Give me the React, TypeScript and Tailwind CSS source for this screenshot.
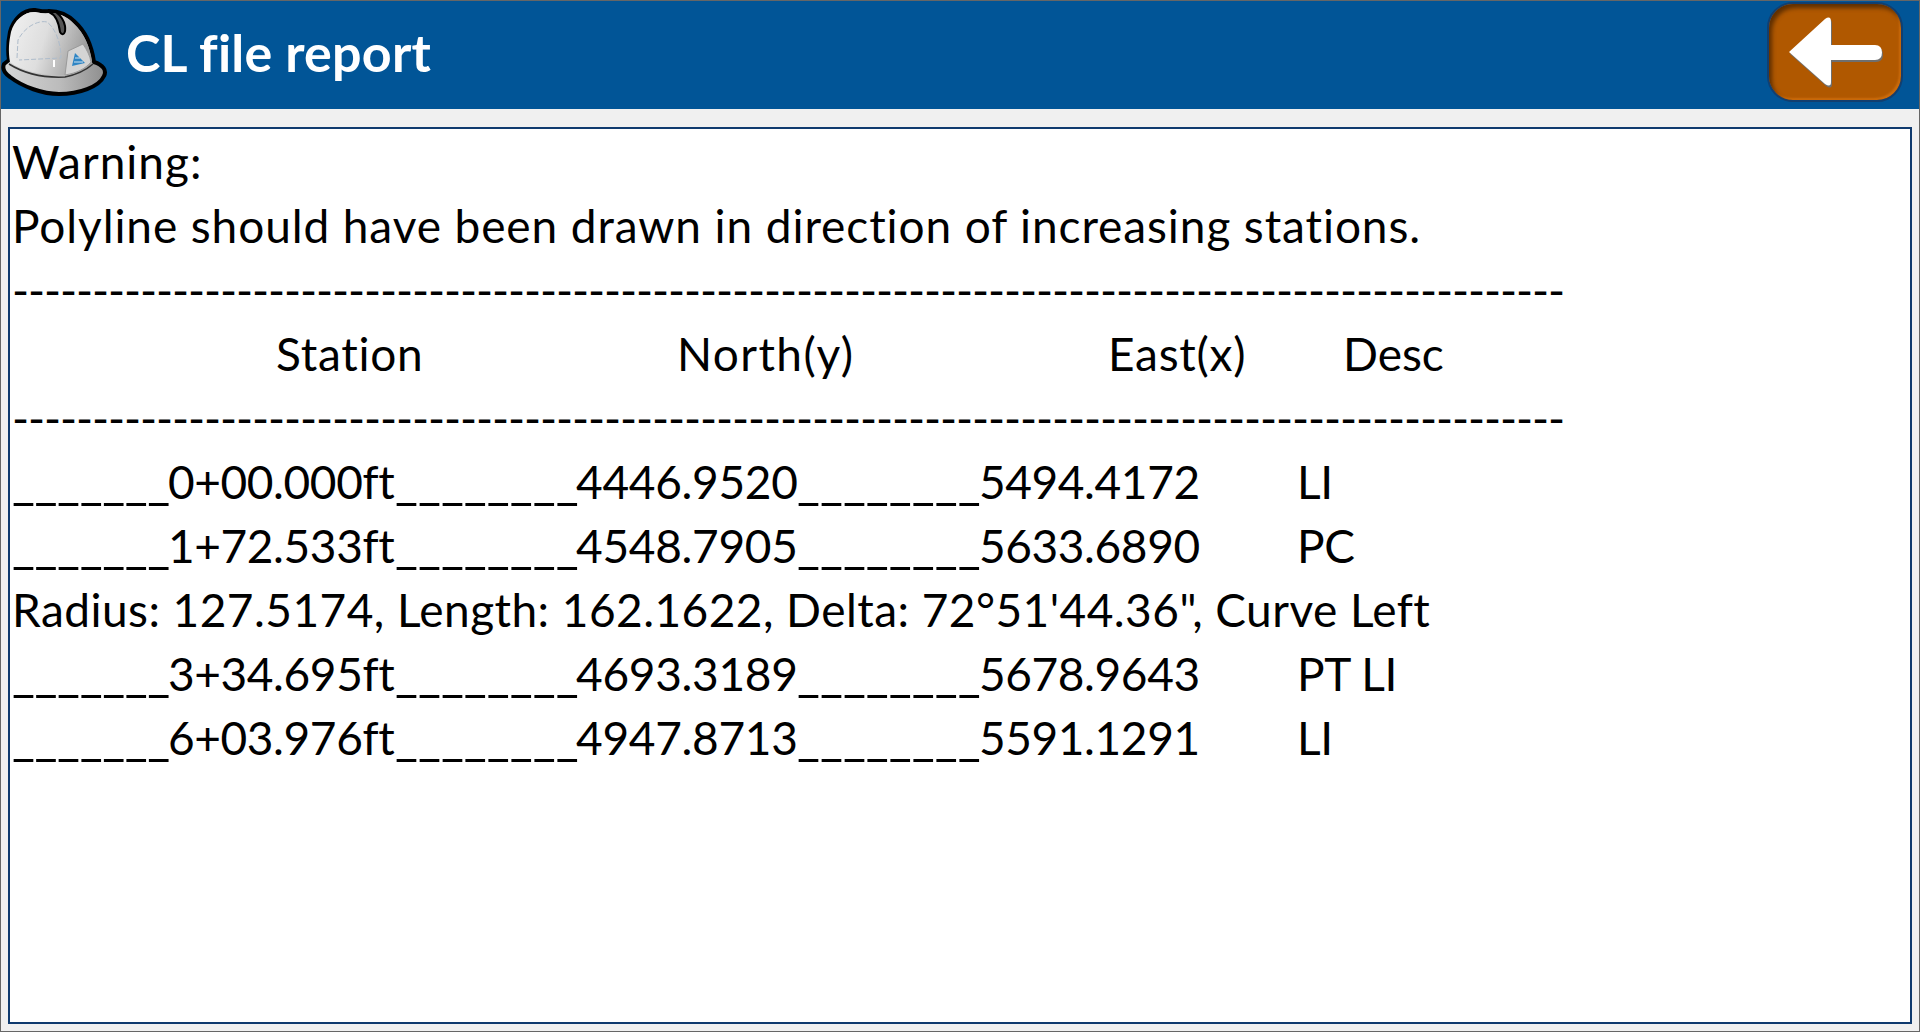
function Helmet() {
  // drawn in page coordinates, so the viewBox starts where the svg sits
  return (
    <svg width="108" height="98" viewBox="0 6 108 98" className="shrink-0">
      <defs>
        <linearGradient id="shell" x1="0" y1="0" x2="1" y2="0.25">
          <stop offset="0" stopColor="#f2f2f2" />
          <stop offset="0.5" stopColor="#dedede" />
          <stop offset="1" stopColor="#9c9c9c" />
        </linearGradient>
        <linearGradient id="brim" x1="0" y1="0" x2="1" y2="0">
          <stop offset="0" stopColor="#d6d6d6" />
          <stop offset="0.55" stopColor="#bcbcbc" />
          <stop offset="1" stopColor="#8e8e8e" />
        </linearGradient>
      </defs>
      <path d="M3 64 C1 69 3 73 9 77 C22 87 42 94 58 94 C78 94 98 87 103 76 C106 70 102 65 93 62 C91 48 85 32 74 22 C68 16 60 11 48 11 C44 12 40 11 34 10 C22 9 12 20 9 32 C7 42 7 54 8 60 Z" fill="url(#brim)" stroke="#000" strokeWidth="4" strokeLinejoin="round" />
      <path d="M9 62 C7 50 8 42 10 32 C13 21 22 12 34 12 C40 13 44 14 48 13 C60 13 68 18 73 24 C84 34 89 48 91 61 C86 68 76 72 64 75 C44 76 22 72 9 62 Z" fill="url(#shell)" />
      <path d="M8 64 C24 74 44 78 64 77 C74 75 84 71 92 64" fill="none" stroke="#333" strokeWidth="1.5" />
      <path d="M48 12 C55 15 58 24 59 32 C62 37 65 33 64 26 C63 20 60 16 55 12 Z" fill="#555" stroke="#000" strokeWidth="2" />
      <path d="M16 58 L17 40 C24 26 38 20 46 22 C54 28 60 42 60 58 L18 60" fill="none" stroke="#aebccb" strokeWidth="1" strokeDasharray="5 2" />
      <path d="M64 75 L67 51 L82 44 C86 50 89 56 90 62 C84 69 76 73 64 75 Z" fill="#d4d4d4" stroke="#9a9a9a" strokeWidth="1" />
      <path d="M71 66 L74 53 L84 63 Z" fill="#2f85c4" />
      <path d="M73 62 H82 M74 58 H79" stroke="#cfe2f0" strokeWidth="1" />
      <path d="M53 60 V67" stroke="#fff" strokeWidth="2" />
    </svg>
  )
}

function BackButton() {
  return (
    <div className="w-[136px] h-[100px] mb-[6px] rounded-[26px] bg-[#b05800] border-2 border-[#123f70] shadow-[inset_3px_4px_4px_#5f2f00,inset_-2px_-2px_2px_#cc6c0c] flex items-center justify-center shrink-0">
      <svg width="96" height="72" viewBox="0 0 96 72">
        <path d="M2 36 L38 3 Q44 -1 44 6 V29 H88 Q95 29 95 36.5 Q95 44 88 44 H44 V66 Q44 72 38 68 Z" fill="#6f6f6f" transform="translate(1 2)" />
        <path d="M2 36 L38 3 Q44 -1 44 6 V29 H88 Q95 29 95 36.5 Q95 44 88 44 H44 V66 Q44 72 38 68 Z" fill="#fff" />
      </svg>
    </div>
  )
}

const dashes = '-'.repeat(97)

const rows = [
  { station: '0+00.000ft', north: '4446.9520', east: '5494.4172', desc: 'LI' },
  { station: '1+72.533ft', north: '4548.7905', east: '5633.6890', desc: 'PC' },
  { note: 'Radius: 127.5174, Length: 162.1622, Delta: 72°51\'44.36", Curve Left' },
  { station: '3+34.695ft', north: '4693.3189', east: '5678.9643', desc: 'PT LI' },
  { station: '6+03.976ft', north: '4947.8713', east: '5591.1291', desc: 'LI' },
]

function Line({ children }: { children: React.ReactNode }) {
  return <div className="h-16 leading-[64px] whitespace-nowrap flex items-baseline">{children}</div>
}

function DashLine() {
  return (
    <Line>
      <span className="tracking-[-1.09px]">{dashes}</span>
    </Line>
  )
}

export default function App() {
  return (
    <div className="w-[1920px] h-[1032px] bg-[#f0f0f0] border border-[#666] overflow-hidden flex flex-col font-['Lato',sans-serif]">
      <header className="h-[108px] bg-[#015597] flex items-center justify-between pr-[16px] shrink-0">
        <div className="flex items-center gap-[17px]">
          <Helmet />
          <h1 className="text-white text-[52px] font-bold tracking-[0.2px] mb-[6px]">CL file report</h1>
        </div>
        <BackButton />
      </header>
      <main className="mt-[18px] mx-[7px] h-[897px] bg-white border-2 border-[#0f3a6e] pt-[1px] pl-[2px] text-[46px] text-black overflow-hidden">
        <Line><span className="tracking-[1px]">Warning:</span></Line>
        <Line><span className="tracking-[0.9px]">Polyline should have been drawn in direction of increasing stations.</span></Line>
        <DashLine />
        <Line>
          <span className="w-[264px]" />
          <span className="w-[401px] tracking-[0.75px]">Station</span>
          <span className="w-[431px] tracking-[1.4px]">North(y)</span>
          <span className="w-[235px] tracking-[0.75px]">East(x)</span>
          <span>Desc</span>
        </Line>
        <DashLine />
        {rows.map((row, i) =>
          row.note ? (
            <Line key={i}><span className="tracking-[0.45px]">{row.note}</span></Line>
          ) : (
            <Line key={i}>
              <span className="w-[156px] text-[50px] leading-[46px] tracking-[-0.4px]">{'_'.repeat(7)}</span>
              <span className="w-[227px] tracking-[-0.4px]">{row.station}</span>
              <span className="w-[181px] text-[50px] leading-[46px]">{'_'.repeat(8)}</span>
              <span className="w-[221px] tracking-[-0.3px]">{row.north}</span>
              <span className="w-[182px] text-[50px] leading-[46px]">{'_'.repeat(8)}</span>
              <span className="w-[318px] tracking-[-0.4px]">{row.east}</span>
              <span className="tracking-[-0.3px]">{row.desc}</span>
            </Line>
          )
        )}
      </main>
    </div>
  )
}
